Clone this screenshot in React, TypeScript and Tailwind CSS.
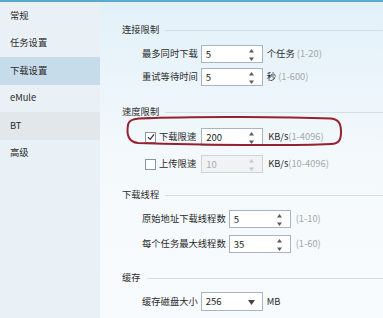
const font = { fontFamily: '"Noto Sans CJK SC", "Noto Sans", sans-serif' };

function Arrows({ disabled }: { disabled?: boolean }) {
  const c = disabled ? "#c4c8cc" : "#555b61";
  return (
    <svg width="7" height="14" viewBox="0 0 7 14" className="absolute right-[7px] top-[2px]">
      <path d="M3.5 1 L6 4.5 L1 4.5 Z" fill={c} />
      <path d="M3.5 13 L6 9.5 L1 9.5 Z" fill={c} />
    </svg>
  );
}

function Spin({ value, disabled }: { value: string; disabled?: boolean }) {
  return (
    <div
      className={`relative h-[18px] w-[62px] shrink-0 border pl-[4px] text-[9.5px] leading-[16px] ${
        disabled ? "border-[#cdd3d8] bg-[#f1f2f3] text-[#a9acaf]" : "border-[#a7b5c3] bg-white text-[#222]"
      }`}
    >
      {value}
      <Arrows disabled={disabled} />
    </div>
  );
}

function Heading({ title }: { title: string }) {
  return (
    <div className="flex h-[14px] items-center gap-[6px] text-[9.3px] text-[#2e2e2e]">
      <span>{title}</span>
      <div className="h-px flex-1 bg-[#d6dee4]" />
    </div>
  );
}

function Check({ checked }: { checked?: boolean }) {
  return (
    <div className="flex h-[11px] w-[11px] shrink-0 items-center justify-center border border-[#8a96a2] bg-white">
      {checked && (
        <svg width="8" height="8" viewBox="0 0 8 8">
          <path d="M1 4.2 L3.2 6.4 L7 1.4" fill="none" stroke="#333" strokeWidth="1.2" />
        </svg>
      )}
    </div>
  );
}

const menu = [
  { name: "常规", bg: "" },
  { name: "任务设置", bg: "" },
  { name: "下载设置", bg: "bg-[#c7dceb]" },
  { name: "eMule", bg: "" },
  { name: "BT", bg: "bg-[#e2e7eb]" },
  { name: "高级", bg: "" },
];

export default function App() {
  return (
    <div
      style={font}
      className="relative flex h-[318px] w-[383px] overflow-hidden border-t-2 border-[#5aaacd] bg-gradient-to-b from-[#e2f1f9] via-[#f4f9fc] to-[#f8fbfd] text-[#2a2a2a]"
    >
      <div className="w-[100px] shrink-0 bg-[#e9f1f7]">
        {menu.map((m) => (
          <div key={m.name} className={`flex h-[27.5px] items-center pl-[10px] text-[9.3px] ${m.bg}`}>
            {m.name}
          </div>
        ))}
      </div>

      <div className="flex flex-1 flex-col pl-[22px] pt-[21px] text-[9.3px]">
        <Heading title="连接限制" />
        <div className="mt-[8px] flex items-center gap-[3px] pl-[20px]">
          <span>最多同时下载</span>
          <Spin value="5" />
          <span className="ml-[1px]">
            个任务 <span className="text-[#a4a8ac]">(1-20)</span>
          </span>
        </div>
        <div className="mt-[5px] flex items-center gap-[3px] pl-[20px]">
          <span>重试等待时间</span>
          <Spin value="5" />
          <span className="ml-[1px]">
            秒 <span className="text-[#a4a8ac]">(1-600)</span>
          </span>
        </div>

        <div className="mt-[19px]">
          <Heading title="速度限制" />
        </div>
        <div className="mt-[9px] flex items-center pl-[23px]">
          <Check checked />
          <span className="ml-[3px]">下载限速</span>
          <div className="ml-[5px]">
            <Spin value="200" />
          </div>
          <span className="ml-[5px]">
            KB/s<span className="text-[#a4a8ac]">(1-4096)</span>
          </span>
        </div>
        <div className="mt-[9px] flex items-center pl-[23px]">
          <Check />
          <span className="ml-[3px]">上传限速</span>
          <div className="ml-[5px]">
            <Spin value="10" disabled />
          </div>
          <span className="ml-[5px]">
            KB/s<span className="text-[#a4a8ac]">(10-4096)</span>
          </span>
        </div>

        <div className="mt-[15px]">
          <Heading title="下载线程" />
        </div>
        <div className="mt-[8px] flex items-center gap-[3px] pl-[20px]">
          <span>原始地址下载线程数</span>
          <Spin value="5" />
          <span className="ml-[2px] text-[#a4a8ac]">(1-10)</span>
        </div>
        <div className="mt-[7px] flex items-center gap-[3px] pl-[20px]">
          <span>每个任务最大线程数</span>
          <Spin value="35" />
          <span className="ml-[2px] text-[#a4a8ac]">(1-60)</span>
        </div>

        <div className="mt-[18px]">
          <Heading title="缓存" />
        </div>
        <div className="mt-[7px] flex items-center gap-[3px] pl-[20px]">
          <span>缓存磁盘大小</span>
          <div className="relative h-[19px] w-[62px] shrink-0 border border-[#a7b5c3] bg-white pl-[4px] text-[9.5px] leading-[17px] text-[#222]">
            256
            <svg width="7" height="5" viewBox="0 0 7 5" className="absolute right-[7px] top-[7px]">
              <path d="M0 0 L7 0 L3.5 5 Z" fill="#444" />
            </svg>
          </div>
          <span className="ml-[1px]">MB</span>
        </div>
      </div>

      <svg className="pointer-events-none absolute left-0 top-[-2px]" width="383" height="318" viewBox="0 0 383 318">
        <path
          d="M140 118.5 C200 116, 290 117, 331 118.5 C339 119.5, 341 124, 341 132 C341 140, 339 143.5, 331 144 C290 146, 200 145, 138 143 C128 142, 126.5 134, 128 125 C129 119.5, 133 118.5, 150 118"
          fill="none"
          stroke="#96202d"
          strokeWidth="2"
          strokeLinecap="round"
        />
      </svg>
    </div>
  );
}
